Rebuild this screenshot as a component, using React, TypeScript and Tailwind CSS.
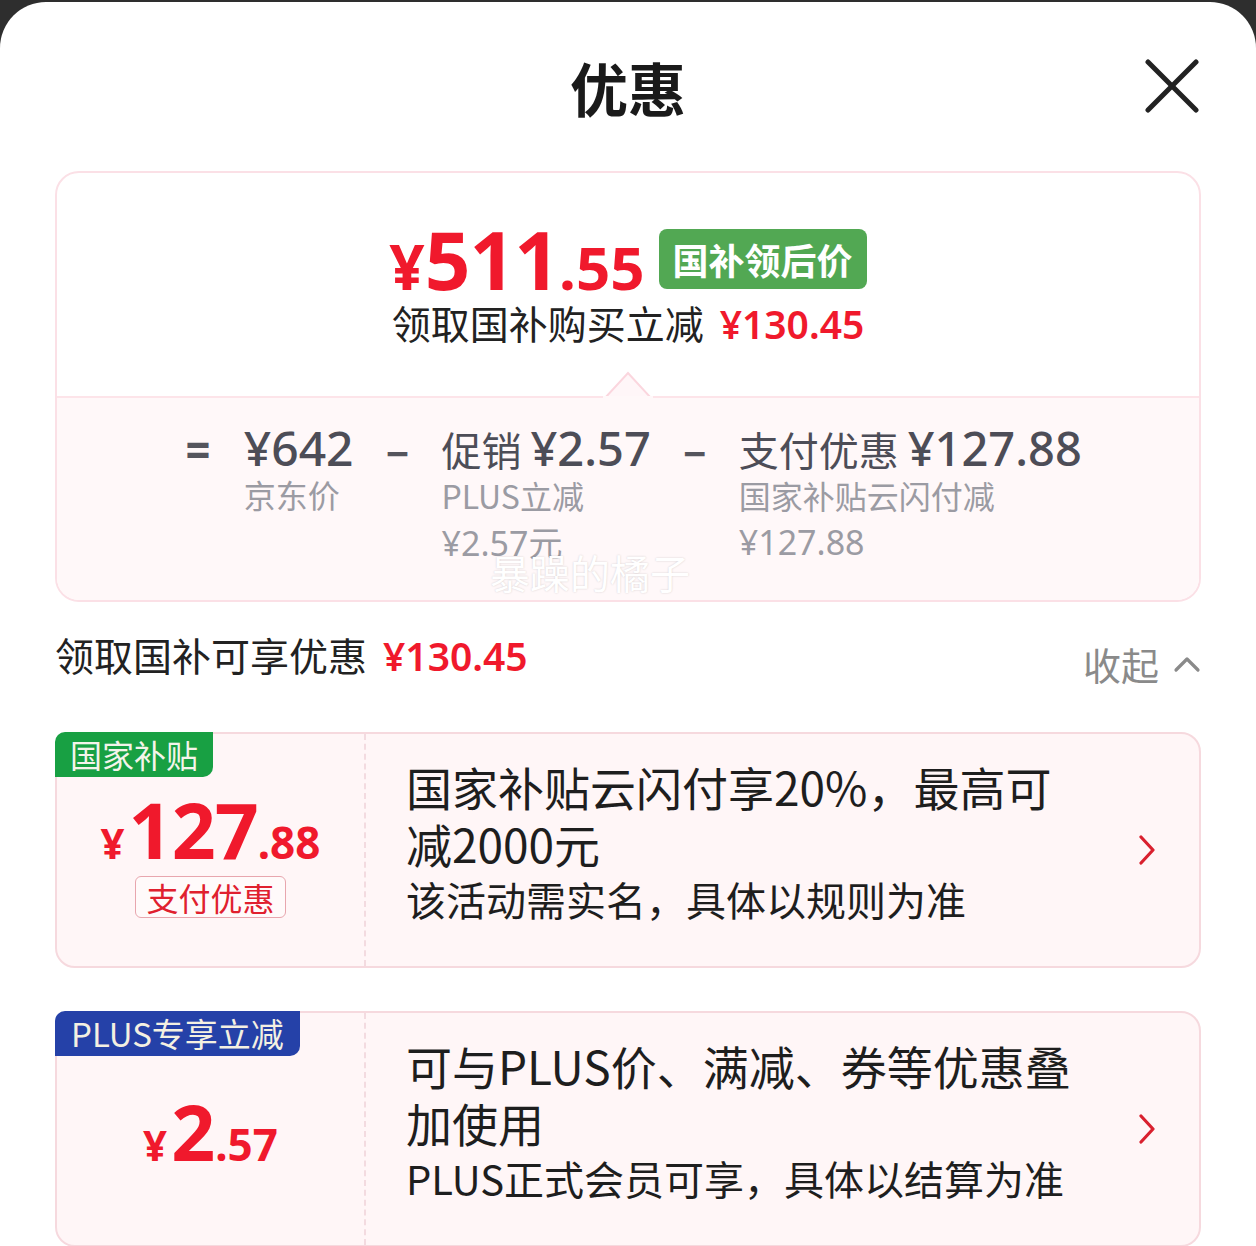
import React from "react";

const NUM = "font-['Noto_Sans','Roboto',sans-serif]";

function Chevron() {
  return (
    <svg width="18" height="30" viewBox="0 0 18 30" className="shrink-0">
      <polyline points="3,2 15,15 3,28" fill="none" stroke="#d9202e" strokeWidth="3.2" strokeLinecap="round" strokeLinejoin="round" />
    </svg>
  );
}

export default function App() {
  return (
    <div className="w-[1256px] h-[1246px] overflow-hidden bg-[#2e2e2e] pt-[2px] font-['Noto_Sans_CJK_SC','Noto_Sans',sans-serif]">
      <div className="h-[1300px] bg-white rounded-t-[46px] px-[55px]">
        {/* header */}
        <div className="relative h-[169px] flex items-center justify-center">
          <h1 className="text-[58px] font-bold text-[#1a1a1a] leading-none">优惠</h1>
          <svg className="absolute right-[2px] top-[57px]" width="54" height="54" viewBox="0 0 54 54">
            <line x1="3" y1="3" x2="51" y2="51" stroke="#222" strokeWidth="5" strokeLinecap="round" />
            <line x1="51" y1="3" x2="3" y2="51" stroke="#222" strokeWidth="5" strokeLinecap="round" />
          </svg>
        </div>

        {/* summary card */}
        <div className="h-[431px] border-2 border-[#fbe0e6] rounded-[24px] flex flex-col overflow-hidden">
          <div className="h-[223px] flex flex-col items-center pt-[46px]">
            <div className="flex items-center">
              <div className={`flex items-baseline text-[#f0192c] font-bold ${NUM} [font-stretch:75%]`}>
                <span className="text-[62px] leading-none">¥</span>
                <span className="text-[80px] leading-none tracking-[-1px]">511</span>
                <span className="text-[60px] leading-none">.55</span>
              </div>
              <div className="ml-[14px] h-[60px] px-[14px] rounded-[8px] bg-[#52a853] text-white text-[36px] font-bold flex items-center leading-none">
                国补领后价
              </div>
            </div>
            <div className="mt-[0px] flex items-baseline text-[39px] leading-[46px] text-[#222]">
              <span>领取国补购买立减</span>
              <span className={`ml-[16px] text-[#f0192c] font-semibold ${NUM} text-[39px]`}>¥130.45</span>
            </div>
          </div>
          <div className="relative flex-1 bg-[#fff8f9] border-t-2 border-[#fde4e9]">
            <svg className="absolute left-1/2 -translate-x-1/2 top-[-27px]" width="50" height="27" viewBox="0 0 50 27">
              <polygon points="2,27 25,2 48,27" fill="#fff6f8" stroke="#fbd6de" strokeWidth="2" />
              <rect x="0" y="25" width="50" height="2" fill="#fff8f9" />
            </svg>
            <div className="flex justify-center gap-[32px] pt-[26px] pl-[10px]">
              <span className="mt-[2px] text-[48px] leading-[48px] font-bold text-[#55555d] font-['Roboto',sans-serif]">=</span>
              <div className="flex flex-col">
                <span className={`text-[48px] leading-[48px] font-medium text-[#4d4d57] ${NUM} [font-stretch:87.5%]`}>¥642</span>
                <span className="text-[32px] leading-[44px] text-[#9b9ba3]">京东价</span>
              </div>
              <span className="text-[44px] leading-[48px] font-bold text-[#55555d]">–</span>
              <div className="flex flex-col">
                <span className="text-[40px] leading-[48px] text-[#4d4d57] whitespace-nowrap">
                  促销 <span className={`text-[47px] font-medium ${NUM} [font-stretch:87.5%]`}>¥2.57</span>
                </span>
                <span className="text-[32px] leading-[44px] text-[#9b9ba3]">PLUS立减</span>
                <span className={`text-[34px] leading-[50px] text-[#9b9ba3] ${NUM} [font-stretch:87.5%]`}>¥2.57<span className="font-['Noto_Sans_CJK_SC']">元</span></span>
              </div>
              <span className="text-[44px] leading-[48px] font-bold text-[#55555d]">–</span>
              <div className="flex flex-col">
                <span className="text-[40px] leading-[48px] text-[#4d4d57] whitespace-nowrap">
                  支付优惠 <span className={`text-[47px] font-medium ${NUM} [font-stretch:87.5%]`}>¥127.88</span>
                </span>
                <span className="text-[32px] leading-[44px] text-[#9b9ba3]">国家补贴云闪付减</span>
                <span className={`text-[34px] leading-[50px] text-[#9b9ba3] ${NUM} [font-stretch:87.5%]`}>¥127.88</span>
              </div>
            </div>
            <span className="absolute left-[433px] top-[152px] text-[40px] leading-[44px] text-white [text-shadow:0_0_2px_rgba(0,0,0,0.18)]">暴躁的橘子</span>
          </div>
        </div>

        {/* section header */}
        <div className="mt-[30px] flex items-center justify-between h-[46px]">
          <div className="flex items-baseline text-[39px] leading-[46px] text-[#222]">
            <span>领取国补可享优惠</span>
            <span className={`ml-[16px] text-[#f0192c] font-semibold ${NUM}`}>¥130.45</span>
          </div>
          <div className="flex items-center mt-[18px]">
            <span className="text-[38px] leading-[46px] text-[#8a8a8a]">收起</span>
            <svg className="ml-[14px]" width="28" height="18" viewBox="0 0 28 18">
              <polyline points="3,15 14,4 25,15" fill="none" stroke="#8a8a8a" strokeWidth="3.2" strokeLinecap="round" strokeLinejoin="round" />
            </svg>
          </div>
        </div>

        {/* coupon 1 */}
        <div className="relative mt-[54px] h-[236px] border-2 border-[#f6d9de] bg-[#fff6f7] rounded-[20px] flex">
          <div className="absolute -top-[2px] -left-[2px] h-[45px] px-[15px] bg-[#18a043] rounded-tl-[10px] rounded-br-[10px] text-[32px] leading-[45px] text-[#f4f4ea]">国家补贴</div>
          <div className="w-[309px] shrink-0 border-r-2 border-dashed border-[#f3dbe0] flex flex-col items-center justify-center pt-[8px]">
            <div className={`flex items-baseline text-[#f0192c] font-bold ${NUM} [font-stretch:75%]`}>
              <span className="text-[42px] leading-none">¥</span>
              <span className="text-[77px] leading-none tracking-[-1px] ml-[4px]">127</span>
              <span className="text-[44px] leading-none">.88</span>
            </div>
            <div className="mt-[8px] h-[42px] px-[10px] border border-[#e8a6ae] rounded-[6px] bg-[#fffafa] text-[32px] leading-[40px] text-[#e0202e]">支付优惠</div>
          </div>
          <div className="flex-1 flex items-center pl-[40px] pb-[16px]">
            <div className="flex-1 flex flex-col">
              <span className="text-[46px] leading-[57px] text-[#1e1e1e]">国家补贴云闪付享20%，最高可<br />减2000元</span>
              <span className="text-[40px] leading-[54px] text-[#1e1e1e]">该活动需实名，具体以规则为准</span>
            </div>
            <div className="mr-[43px] mt-[16px]"><Chevron /></div>
          </div>
        </div>

        {/* coupon 2 */}
        <div className="relative mt-[43px] h-[236px] border-2 border-[#f6d9de] bg-[#fff6f7] rounded-[20px] flex">
          <div className="absolute -top-[2px] -left-[2px] h-[45px] px-[16px] bg-[#2541a8] rounded-tl-[10px] rounded-br-[10px] text-[33px] leading-[45px] text-[#f4f0e2]">PLUS专享立减</div>
          <div className="w-[309px] shrink-0 border-r-2 border-dashed border-[#f3dbe0] flex flex-col items-center justify-center pt-[4px]">
            <div className={`flex items-baseline text-[#f0192c] font-bold ${NUM} [font-stretch:75%]`}>
              <span className="text-[42px] leading-none">¥</span>
              <span className="text-[77px] leading-none ml-[4px]">2</span>
              <span className="text-[44px] leading-none">.57</span>
            </div>
          </div>
          <div className="flex-1 flex items-center pl-[40px] pb-[16px]">
            <div className="flex-1 flex flex-col">
              <span className="text-[46px] leading-[57px] text-[#1e1e1e]">可与PLUS价、满减、券等优惠叠<br />加使用</span>
              <span className="text-[40px] leading-[54px] text-[#1e1e1e]">PLUS正式会员可享，具体以结算为准</span>
            </div>
            <div className="mr-[43px] mt-[16px]"><Chevron /></div>
          </div>
        </div>
      </div>
    </div>
  );
}
